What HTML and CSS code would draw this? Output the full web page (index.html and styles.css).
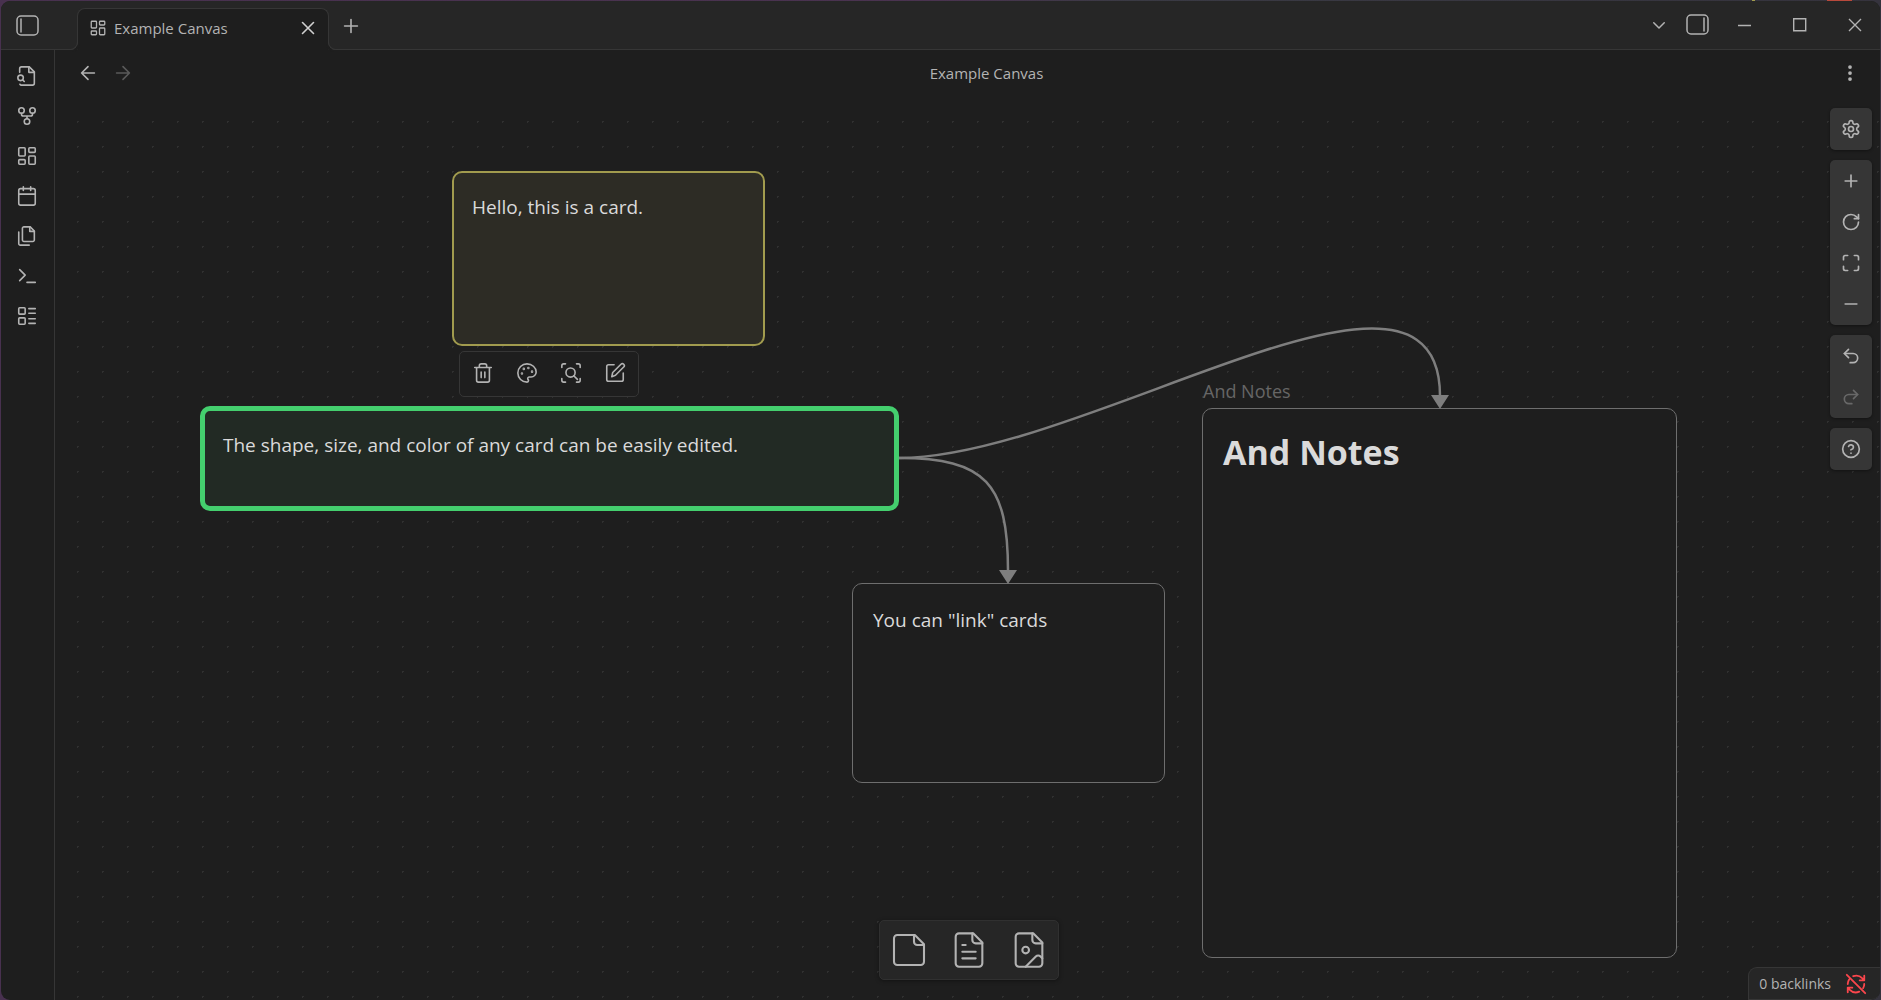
FILE: index.html
```html
<!DOCTYPE html>
<html lang="en">
<head>
<meta charset="utf-8">
<title>Example Canvas</title>
<link rel="stylesheet" href="styles.css">
</head>
<body>
<svg class="sprite" aria-hidden="true">
  <symbol id="grid" viewBox="0 0 24 24"><rect x="3" y="3" width="7" height="9" rx="1"/><rect x="14" y="3" width="7" height="5" rx="1"/><rect x="14" y="12" width="7" height="9" rx="1"/><rect x="3" y="16" width="7" height="5" rx="1"/></symbol>
  <symbol id="x" viewBox="0 0 24 24"><path d="M18 6 6 18M6 6l12 12"/></symbol>
  <symbol id="plus" viewBox="0 0 24 24"><path d="M5 12h14M12 5v14"/></symbol>
  <symbol id="minus" viewBox="0 0 24 24"><path d="M5 12h14"/></symbol>
</svg>
<div class="window">
  <header class="titlebar">
    <button class="icon-btn sidebar-toggle" aria-label="Collapse sidebar"><svg class="icon panel" viewBox="0 0 24 22"><rect x="1" y="1" width="21" height="19" rx="4"/><path d="M5 4v13"/></svg></button>
    <div class="tab">
      <svg class="icon small"><use href="#grid"/></svg>
      <span class="tab-title">Example Canvas</span>
      <button class="icon-btn tab-close" aria-label="Close tab"><svg class="icon"><use href="#x"/></svg></button>
    </div>
    <button class="icon-btn new-tab" aria-label="New tab"><svg class="icon mid"><use href="#plus"/></svg></button>
    <div class="window-tools">
      <button class="icon-btn tab-list" aria-label="Tab list"><svg class="icon small strong" viewBox="0 0 24 24"><path d="m5 9 7 7 7-7"/></svg></button>
      <button class="icon-btn" aria-label="Expand right sidebar"><svg class="icon panel" viewBox="0 0 24 22"><rect x="1" y="1" width="21" height="19" rx="4"/><path d="M18 4v13"/></svg></button>
    </div>
    <div class="window-controls">
      <button class="icon-btn" aria-label="Minimize"><svg class="caption" viewBox="0 0 14 14"><path d="M0 7.500h13"/></svg></button>
      <button class="icon-btn" aria-label="Maximize"><svg class="caption" viewBox="0 0 14 14"><path d="M.7.7h12v12H.7z"/></svg></button>
      <button class="icon-btn" aria-label="Close"><svg class="caption" viewBox="0 0 14 14"><path d="m1 1 12 12M13 1 1 13"/></svg></button>
    </div>
  </header>
  <div class="body">
    <nav class="ribbon" aria-label="Ribbon">
      <button class="icon-btn" aria-label="Quick switcher"><svg class="icon" viewBox="0 0 24 24"><path d="M4 8V4a2 2 0 0 1 2-2h8.500L20 7.500V20a2 2 0 0 1-2 2H6a2 2 0 0 1-1.700-1"/><path d="M14 2v6h6"/><circle cx="5" cy="14" r="3"/><path d="m9 18-1.500-1.500"/></svg></button>
      <button class="icon-btn" aria-label="Graph view"><svg class="icon" viewBox="0 0 24 24"><circle cx="12" cy="18" r="3"/><circle cx="6" cy="6" r="3"/><circle cx="18" cy="6" r="3"/><path d="M18 9v1a2 2 0 0 1-2 2H8a2 2 0 0 1-2-2V9M12 12v3"/></svg></button>
      <button class="icon-btn" aria-label="New canvas"><svg class="icon"><use href="#grid"/></svg></button>
      <button class="icon-btn" aria-label="Daily note"><svg class="icon" viewBox="0 0 24 24"><rect x="3" y="4" width="18" height="18" rx="2"/><path d="M16 2v4M8 2v4M3 10h18"/></svg></button>
      <button class="icon-btn" aria-label="Insert template"><svg class="icon" viewBox="0 0 24 24"><path d="M15.500 2H8.600c-.4 0-.8.2-1.100.5-.3.300-.5.700-.5 1.100v12.800c0 .4.200.8.500 1.100.3.300.7.500 1.100.5h9.800c.4 0 .8-.2 1.100-.5.300-.3.500-.7.500-1.100V6.500L15.500 2z"/><path d="M3 7.600v12.800c0 .4.200.8.500 1.100.3.300.7.500 1.100.5h9.800M15 2v5h5"/></svg></button>
      <button class="icon-btn" aria-label="Command palette"><svg class="icon" viewBox="0 0 24 24"><path d="m4 17 6-6-6-6M12 19h9"/></svg></button>
      <button class="icon-btn" aria-label="Layout list"><svg class="icon" viewBox="0 0 24 24"><rect x="3" y="3" width="7" height="7" rx="1"/><rect x="3" y="14" width="7" height="7" rx="1"/><path d="M14 4h7M14 9h7M14 15h7M14 20h7"/></svg></button>
    </nav>
    <main class="view">
      <div class="view-header">
        <button class="icon-btn" aria-label="Back"><svg class="icon mid" viewBox="0 0 24 24"><path d="m12 19-7-7 7-7M19 12H5"/></svg></button>
        <button class="icon-btn" aria-label="Forward" disabled><svg class="icon mid" viewBox="0 0 24 24"><path d="M5 12h14M12 5l7 7-7 7"/></svg></button>
        <h2 class="view-title">Example Canvas</h2>
        <button class="icon-btn" aria-label="More options"><svg class="icon dots" viewBox="0 0 24 24"><circle cx="12" cy="4" r="2.500"/><circle cx="12" cy="12" r="2.500"/><circle cx="12" cy="20" r="2.500"/></svg></button>
      </div>
      <div class="canvas">
        <article class="card yellow"><p>Hello, this is a card.</p></article>
        <article class="card green"><p>The shape, size, and color of any card can be easily edited.</p></article>
        <article class="card link"><p>You can "link" cards</p></article>
        <div class="file-label">And Notes</div>
        <article class="card note"><h1>And Notes</h1></article>
        <svg class="edges" aria-hidden="true">
          <path d="M844 358C1031 358 1385 114 1385 296"/>
          <path d="M844 358C931 358 953 384 953 471"/>
          <path class="head" d="M1376 295h18l-9 14zM944 470h18l-9 14z"/>
        </svg>
        <div class="card-menu" role="toolbar" aria-label="Card">
          <button class="icon-btn" aria-label="Remove"><svg class="icon" viewBox="0 0 24 24"><path d="M3 6h18M19 6v14a2 2 0 0 1-2 2H7a2 2 0 0 1-2-2V6M8 6V4a2 2 0 0 1 2-2h4a2 2 0 0 1 2 2v2M10 11v6M14 11v6"/></svg></button>
          <button class="icon-btn" aria-label="Set color"><svg class="icon" viewBox="0 0 24 24"><circle cx="13.500" cy="6.500" r=".5"/><circle cx="17.500" cy="10.500" r=".5"/><circle cx="8.500" cy="7.500" r=".5"/><circle cx="6.500" cy="12.500" r=".5"/><path d="M12 2C6.500 2 2 6.500 2 12s4.500 10 10 10c.926 0 1.648-.746 1.648-1.688 0-.437-.18-.835-.437-1.125-.29-.289-.438-.652-.438-1.125a1.640 1.640 0 0 1 1.668-1.668h1.996c3.051 0 5.555-2.503 5.555-5.554C21.965 6.012 17.461 2 12 2z"/></svg></button>
          <button class="icon-btn" aria-label="Zoom to selection"><svg class="icon" viewBox="0 0 24 24"><path d="M2 6V4a2 2 0 0 1 2-2h2M18 2h2a2 2 0 0 1 2 2v2M22 18v2a2 2 0 0 1-2 2h-2M6 22H4a2 2 0 0 1-2-2v-2"/><circle cx="11.500" cy="11.500" r="5"/><path d="m15 15 4 4"/></svg></button>
          <button class="icon-btn" aria-label="Edit"><svg class="icon" viewBox="0 0 24 24"><path d="M11 3H5a2 2 0 0 0-2 2v14a2 2 0 0 0 2 2h14a2 2 0 0 0 2-2v-7"/><path d="M18.500 2.500a2.100 2.100 0 0 1 3 3L12.500 14.500 8.500 16l1-4.500z"/></svg></button>
        </div>
        <div class="controls">
          <div class="group"><button class="icon-btn" aria-label="Settings"><svg class="icon ctl" viewBox="0 0 24 24"><path d="M12.220 2h-.44a2 2 0 0 0-2 2v.18a2 2 0 0 1-1 1.730l-.43.250a2 2 0 0 1-2 0l-.15-.08a2 2 0 0 0-2.730.730l-.22.380a2 2 0 0 0 .73 2.730l.150.100a2 2 0 0 1 1 1.720v.510a2 2 0 0 1-1 1.740l-.15.090a2 2 0 0 0-.73 2.730l.220.380a2 2 0 0 0 2.730.730l.150-.08a2 2 0 0 1 2 0l.430.250a2 2 0 0 1 1 1.730V20a2 2 0 0 0 2 2h.440a2 2 0 0 0 2-2v-.18a2 2 0 0 1 1-1.730l.430-.25a2 2 0 0 1 2 0l.150.080a2 2 0 0 0 2.730-.73l.220-.39a2 2 0 0 0-.73-2.730l-.15-.08a2 2 0 0 1-1-1.740v-.5a2 2 0 0 1 1-1.740l.150-.09a2 2 0 0 0 .73-2.730l-.22-.38a2 2 0 0 0-2.730-.73l-.15.080a2 2 0 0 1-2 0l-.43-.25a2 2 0 0 1-1-1.730V4a2 2 0 0 0-2-2z"/><circle cx="12" cy="12" r="3"/></svg></button></div>
          <div class="group">
            <button class="icon-btn" aria-label="Zoom in"><svg class="icon ctl"><use href="#plus"/></svg></button>
            <button class="icon-btn" aria-label="Reset zoom"><svg class="icon ctl" viewBox="0 0 24 24"><path d="M21 12a9 9 0 1 1-9-9c2.520 0 4.930 1 6.740 2.740L21 8"/><path d="M21 3v5h-5"/></svg></button>
            <button class="icon-btn" aria-label="Zoom to fit"><svg class="icon ctl" viewBox="0 0 24 24"><path d="M8 3H5a2 2 0 0 0-2 2v3M21 8V5a2 2 0 0 0-2-2h-3M3 16v3a2 2 0 0 0 2 2h3M16 21h3a2 2 0 0 0 2-2v-3"/></svg></button>
            <button class="icon-btn" aria-label="Zoom out"><svg class="icon ctl"><use href="#minus"/></svg></button>
          </div>
          <div class="group">
            <button class="icon-btn" aria-label="Undo"><svg class="icon ctl" viewBox="0 0 24 24"><path d="M9 14 4 9l5-5"/><path d="M4 9h10.500a5.500 5.500 0 0 1 0 11H11"/></svg></button>
            <button class="icon-btn" aria-label="Redo" disabled><svg class="icon ctl" viewBox="0 0 24 24"><path d="m15 14 5-5-5-5"/><path d="M20 9H9.500a5.500 5.500 0 0 0 0 11H13"/></svg></button>
          </div>
          <div class="group"><button class="icon-btn" aria-label="Canvas help"><svg class="icon ctl" viewBox="0 0 24 24"><circle cx="12" cy="12" r="10"/><path d="M9.090 9a3 3 0 0 1 5.830 1c0 2-3 3-3 3M12 17h.01"/></svg></button></div>
        </div>
        <div class="add-menu" role="toolbar" aria-label="Add">
          <button class="icon-btn" aria-label="Add card"><svg class="icon large" viewBox="0 0 24 24"><path d="M15.500 3H5a2 2 0 0 0-2 2v14a2 2 0 0 0 2 2h14a2 2 0 0 0 2-2V8.500L15.500 3z"/><path d="M15 3v4a2 2 0 0 0 2 2h4"/></svg></button>
          <button class="icon-btn" aria-label="Add note"><svg class="icon large" viewBox="0 0 24 24"><path d="M14.500 2H6a2 2 0 0 0-2 2v16a2 2 0 0 0 2 2h12a2 2 0 0 0 2-2V7.500L14.500 2z"/><path d="M14 2v4a2 2 0 0 0 2 2h4M8 9h2M8 13h8M8 17h8"/></svg></button>
          <button class="icon-btn" aria-label="Add media"><svg class="icon large" viewBox="0 0 24 24"><path d="M14.500 2H6a2 2 0 0 0-2 2v16a2 2 0 0 0 2 2h12a2 2 0 0 0 2-2V7.500L14.500 2z"/><path d="M14 2v4a2 2 0 0 0 2 2h4"/><circle cx="10" cy="12" r="2"/><path d="m20 17-1.100-1.100a2 2 0 0 0-2.810.010L10 22"/></svg></button>
        </div>
      </div>
    </main>
  </div>
  <footer class="status">
    <span>0 backlinks</span>
    <svg class="icon sync" viewBox="0 0 24 24" role="img" aria-label="Sync off"><path d="M21 8 18.700 5.700A9 9 0 0 0 9 3.500M21 3v5h-5M3 16l2.300 2.300A9 9 0 0 0 15.500 20.300M8 16H3v5M3 12a9 9 0 0 1 1.500-5M21 12a9 9 0 0 1-1.200 4.500M2 2l20 20"/></svg>
  </footer>
</div>
</body>
</html>
```
FILE: styles.css
```css
* { box-sizing: border-box; }

body {
  margin: 0;
  height: 100vh;
  padding: 1px 1px 0;
  background:
    linear-gradient(#b8493c, #b8493c) right 29px top / 25px 1px no-repeat,
    linear-gradient(#a19b4e, #a19b4e) right 126px top / 3px 1px no-repeat,
    linear-gradient(90deg, #48314f, #4a3350 50%, #3a3a44 60%, #35333d);
  color: #b3b3b3;
  font-family: "Segoe UI", "Open Sans", "Noto Sans", sans-serif;
  font-size: 15px;
}

.sprite { position: absolute; width: 0; height: 0; }

.window {
  position: relative;
  display: flex;
  flex-direction: column;
  height: 100%;
  border-radius: 9px;
  background: #1e1e1e;
  overflow: hidden;
}

.icon-btn {
  display: flex;
  align-items: center;
  justify-content: center;
  width: 30px;
  height: 30px;
  flex: none;
  padding: 0;
  border: 0;
  background: none;
  color: inherit;
}
.icon-btn:disabled { opacity: .4; }

.icon {
  width: 22px;
  height: 22px;
  flex: none;
  fill: none;
  stroke: currentColor;
  stroke-width: 1.75;
  stroke-linecap: round;
  stroke-linejoin: round;
}
.icon.small { width: 18px; height: 18px; }
.icon.mid { width: 22px; height: 22px; }
.icon.ctl { width: 20px; height: 20px; stroke-width: 2; }
.icon.large { width: 40px; height: 40px; stroke-width: 1.25; }
.icon.strong { stroke-width: 2; }
.icon.panel { width: 24px; height: 22px; stroke-width: 1.5; }
.icon.dots { width: 18px; height: 18px; fill: currentColor; stroke: none; }

/* Title bar */
.titlebar {
  display: flex;
  height: 49px;
  flex: none;
  border-bottom: 1px solid #363636;
  background: #262626;
}
.sidebar-toggle { width: 54px; height: 50px; margin-right: 22px; }
.tab {
  position: relative;
  display: flex;
  align-items: center;
  width: 252px;
  margin: 7px 0 -1px;
  padding: 0 5px 3px 11px;
  border: 1px solid #363636;
  border-bottom: 0;
  border-radius: 8px 8px 0 0;
  background: #1e1e1e;
}
.tab::before,
.tab::after {
  content: "";
  position: absolute;
  bottom: 0;
  width: 8px;
  height: 8px;
  border: 1px solid #363636;
  border-top: 0;
}
.tab::before {
  right: 100%;
  border-left: 0;
  border-bottom-right-radius: 8px;
  box-shadow: 2px 2px 0 #1e1e1e;
}
.tab::after {
  left: 100%;
  border-right: 0;
  border-bottom-left-radius: 8px;
  box-shadow: -2px 2px 0 #1e1e1e;
}
.tab-title { flex: 1; margin-left: 7px; }
.tab-close { color: #d0d0d0; }
.new-tab { width: 44px; height: 50px; }
.window-tools { display: flex; align-items: center; margin: 0 4px 0 auto; gap: 9px; }
.window-controls { display: flex; margin-right: -2px; }
.window-controls .icon-btn { width: 55px; height: 48px; }
.caption { width: 14px; height: 14px; fill: none; stroke: #b3b3b3; stroke-width: 1.4; }

/* Body */
.body { display: flex; flex: 1; min-height: 0; }
.ribbon {
  display: flex;
  flex-direction: column;
  gap: 10px;
  width: 54px;
  padding: 11px 0 0 11px;
  border-right: 1px solid #363636;
}
.view { display: flex; flex: 1; flex-direction: column; min-width: 0; }
.view-header {
  display: flex;
  align-items: center;
  gap: 5px;
  height: 50px;
  flex: none;
  padding: 0 15px 4px 18px;
}
.view-title { flex: 1; margin: 0; font-size: 15px; font-weight: 400; text-align: center; }

/* Canvas: the nodes lie on a free plane with a 25px dot grid */
.canvas {
  position: relative;
  flex: 1;
  min-height: 0;
  overflow: hidden;
  background: radial-gradient(circle, #303030 1px, transparent 1px) 10px 9px / 25px 25px;
}
.edges { position: absolute; inset: 0; width: 100%; height: 100%; fill: none; stroke: #7e7e7e; stroke-width: 2.5; pointer-events: none; }
.edges .head { fill: #7e7e7e; stroke: none; }

.card {
  position: absolute;
  border: 1px solid #6e6e6e;
  border-radius: 10px;
  padding: 20px;
  background: #1e1e1e;
  color: #dadada;
  font-size: 19px;
  line-height: 32px;
}
.card p, .card h1 { margin: 0; }
.card h1 { font-size: 34px; line-height: 46px; font-weight: 700; }
.yellow { left: 397px; top: 71px; width: 313px; height: 175px; border: 2px solid #a19b4e; background: #2d2c25; padding: 18px; }
.green { left: 145px; top: 306px; width: 699px; height: 105px; border: 5px solid #44cf6e; background: #222a24; padding: 18px; }
.link { left: 797px; top: 483px; width: 313px; height: 200px; }
.note { left: 1147px; top: 308px; width: 475px; height: 550px; }
.file-label { position: absolute; left: 1148px; top: 279px; color: #666; font-size: 18px; line-height: 24px; }

.card-menu {
  position: absolute;
  left: 404px;
  top: 251px;
  display: flex;
  gap: 14px;
  padding: 6px 8px 8px;
  border: 1px solid #363636;
  border-radius: 5px;
  background: #1e1e1e;
}

.controls {
  position: absolute;
  right: 8px;
  top: 8px;
  display: flex;
  flex-direction: column;
  gap: 10px;
}
.group {
  padding-bottom: 1px;
  border-radius: 5px;
  background: #363636;
  box-shadow: 0 1px 3px #0006;
}
.group .icon-btn { width: 42px; height: 41px; }

.add-menu {
  position: absolute;
  inset: auto 0 20px 2px;
  display: flex;
  gap: 20px;
  width: fit-content;
  margin: 0 auto;
  padding: 9px;
  border: 1px solid #303030;
  border-radius: 5px;
  background: #262626;
  box-shadow: 0 1px 4px #0006;
}
.add-menu .icon-btn { width: 40px; height: 40px; }

.status {
  position: absolute;
  right: 0;
  bottom: 0;
  display: flex;
  align-items: center;
  gap: 14px;
  height: 33px;
  padding: 0 13px 0 10px;
  border: 1px solid #363636;
  border-right: 0;
  border-radius: 9px 0 9px 0;
  background: #262626;
  font-size: 14px;
}
.sync { color: #fb464c; stroke-width: 2; }
```
